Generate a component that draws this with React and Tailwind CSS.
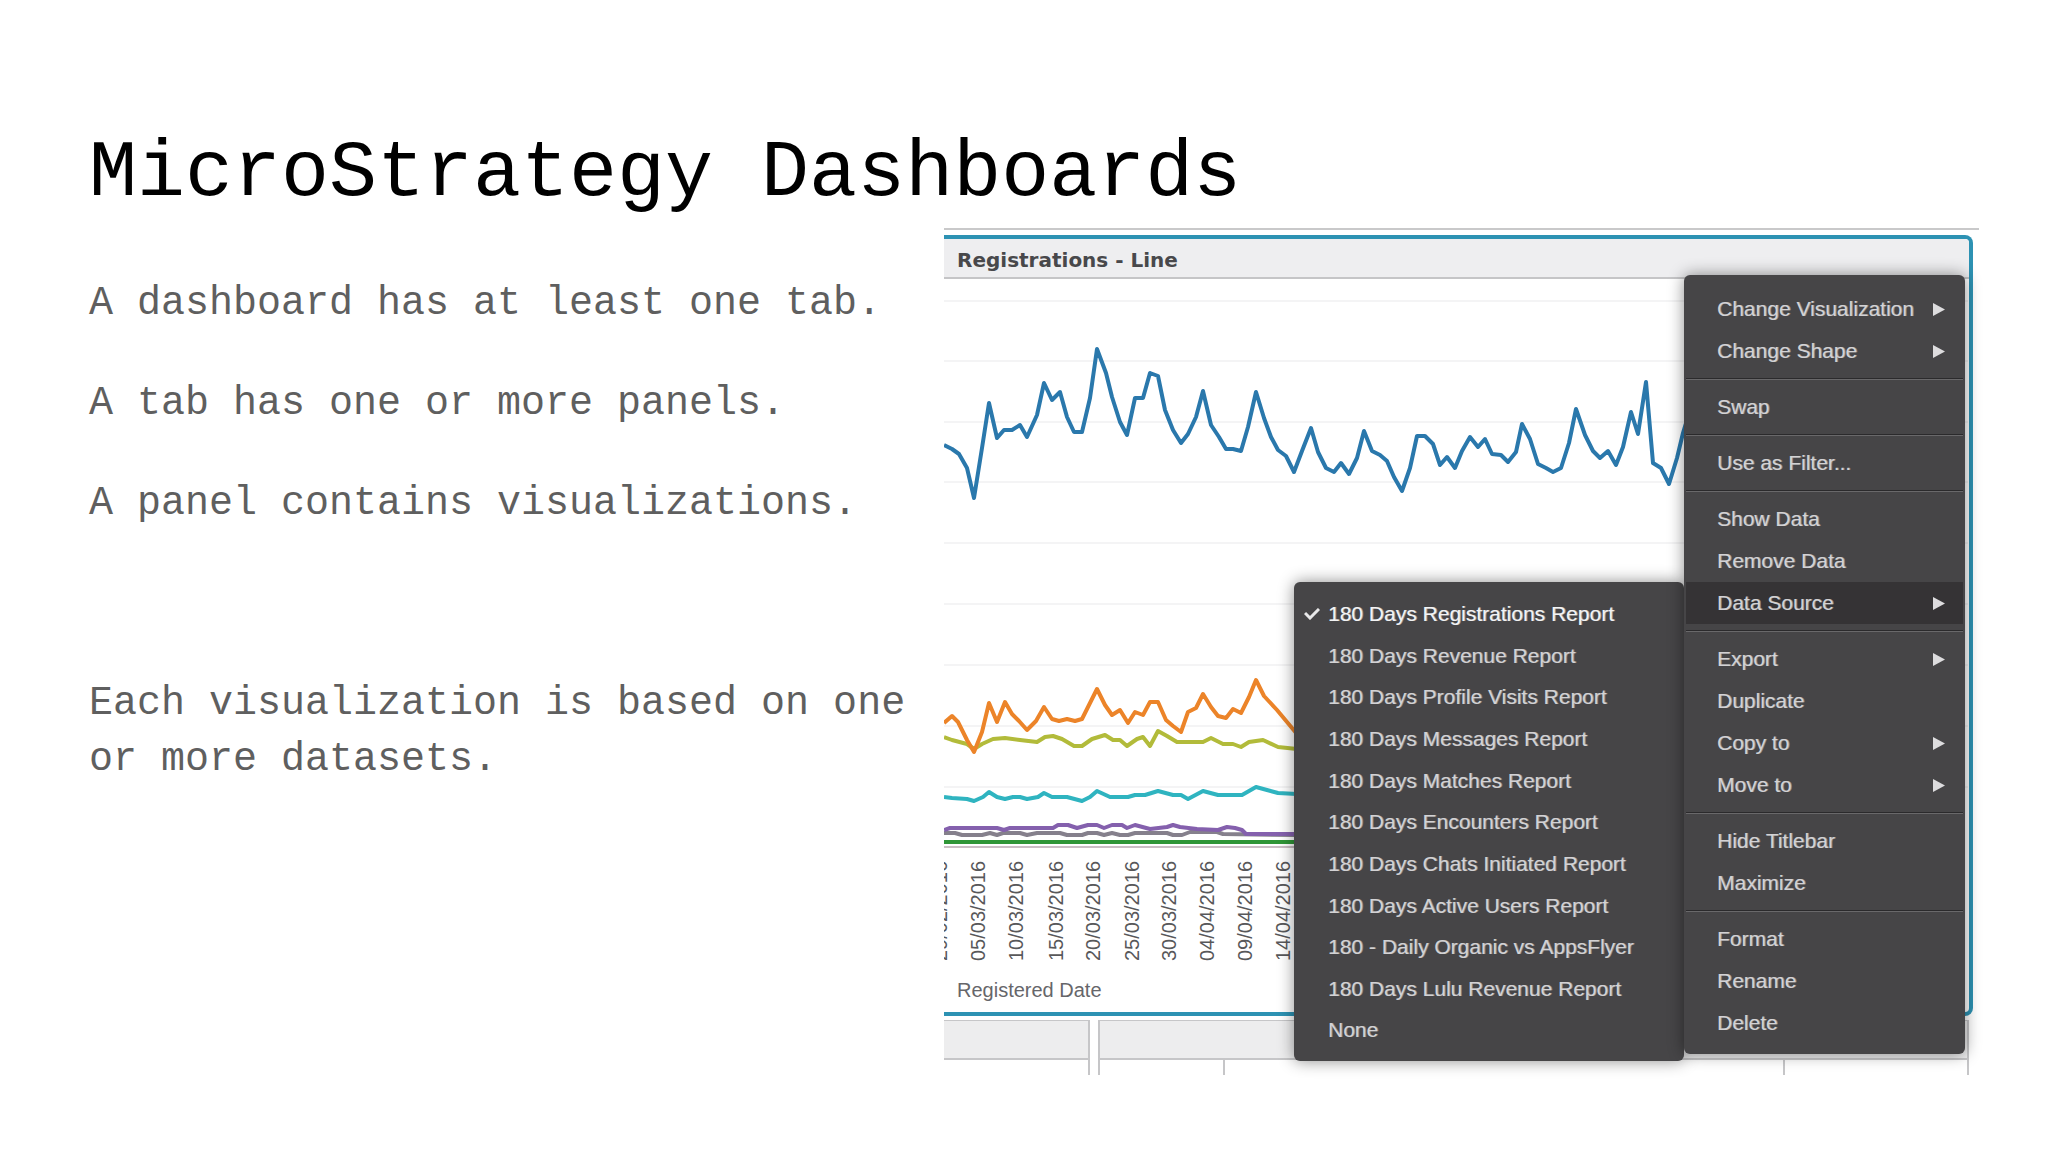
const blueLine =
  "944,445 952,449 959,454 967,468 974,498 982,448 989,403 997,438 1004,430 1012,430 1020,425 1027,437 1037,415 1044,383 1052,400 1060,392 1067,417 1074,432 1082,432 1090,398 1097,349 1106,373 1112,397 1120,422 1127,435 1135,398 1143,398 1150,373 1158,376 1165,410 1173,430 1181,443 1188,434 1196,417 1203,391 1211,425 1219,437 1226,449 1233,449 1241,451 1248,427 1256,392 1264,418 1271,437 1278,450 1286,456 1294,472 1302,451 1311,428 1318,452 1326,468 1334,472 1341,463 1349,474 1357,458 1364,431 1372,451 1380,455 1387,461 1394,477 1402,491 1410,468 1417,436 1425,436 1433,444 1440,465 1447,457 1455,468 1462,451 1470,437 1478,447 1485,439 1492,454 1501,455 1508,462 1516,452 1522,424 1530,439 1538,464 1546,468 1553,472 1561,468 1569,443 1576,409 1585,435 1593,451 1600,458 1608,451 1616,465 1623,447 1631,412 1638,434 1646,382 1653,463 1661,468 1669,484 1677,458 1683,433 1690,410";
const orangeLine =
  "944,723 952,716 958,722 967,740 974,752 982,732 989,703 997,722 1005,702 1012,714 1019,721 1027,730 1036,721 1044,707 1052,719 1059,721 1067,719 1075,721 1082,719 1090,703 1097,689 1105,705 1112,715 1120,710 1128,723 1135,712 1143,715 1150,702 1158,702 1166,720 1173,726 1181,732 1188,712 1196,708 1203,694 1211,707 1218,716 1226,718 1233,709 1241,713 1249,697 1256,680 1264,696 1277,710 1297,734";
const oliveLine =
  "944,737 952,740 967,744 974,749 982,744 993,739 1005,738 1020,740 1037,742 1045,737 1053,736 1062,739 1074,746 1082,746 1092,739 1105,735 1113,740 1120,740 1127,746 1137,739 1143,737 1150,746 1158,731 1167,736 1177,742 1203,742 1211,738 1223,744 1233,744 1241,747 1249,742 1263,740 1278,747 1297,749";
const cyanLine =
  "944,797 952,798 967,799 974,801 983,797 989,792 997,797 1005,799 1013,797 1020,797 1027,799 1038,797 1044,793 1052,797 1067,797 1082,801 1090,797 1097,791 1110,797 1128,797 1135,795 1145,795 1158,791 1173,795 1181,795 1188,799 1203,791 1218,795 1242,795 1256,787 1278,793 1297,794";
const purpleLine =
  "944,830 950,828 997,828 1004,830 1010,828 1053,828 1058,825 1068,825 1077,828 1088,825 1097,825 1104,828 1112,825 1122,825 1127,828 1135,825 1150,829 1167,827 1173,825 1180,827 1197,829 1218,830 1227,827 1235,828 1242,830 1246,834 1263,834 1297,834";
const grayLine =
  "944,833 955,833 962,835 982,835 990,833 997,835 1003,833 1020,833 1027,835 1037,833 1060,833 1067,835 1082,835 1088,833 1097,833 1104,835 1112,833 1120,835 1128,835 1135,833 1167,833 1173,835 1182,835 1190,832 1217,832 1223,834 1297,835";

const series = [
  { name: "gray", color: "#85808c", points: grayLine },
  { name: "purple", color: "#8460ad", points: purpleLine },
  { name: "cyan", color: "#2fb4c0", points: cyanLine },
  { name: "olive", color: "#b2bb3a", points: oliveLine },
  { name: "orange", color: "#ec8429", points: orangeLine },
  { name: "blue", color: "#2a78ac", points: blueLine },
];

const gridLines = [301, 361, 422, 482, 543, 604, 665, 726, 787];

const dates = [
  [940, "29/02/2016"],
  [978, "05/03/2016"],
  [1016, "10/03/2016"],
  [1056, "15/03/2016"],
  [1093, "20/03/2016"],
  [1132, "25/03/2016"],
  [1169, "30/03/2016"],
  [1207, "04/04/2016"],
  [1245, "09/04/2016"],
  [1283, "14/04/2016"],
];

const menuGroups = [
  [
    { label: "Change Visualization", sub: true },
    { label: "Change Shape", sub: true },
  ],
  [{ label: "Swap" }],
  [{ label: "Use as Filter..." }],
  [
    { label: "Show Data" },
    { label: "Remove Data" },
    { label: "Data Source", sub: true, active: true },
  ],
  [
    { label: "Export", sub: true },
    { label: "Duplicate" },
    { label: "Copy to", sub: true },
    { label: "Move to", sub: true },
  ],
  [{ label: "Hide Titlebar" }, { label: "Maximize" }],
  [{ label: "Format" }, { label: "Rename" }, { label: "Delete" }],
];

const sources = [
  "180 Days Registrations Report",
  "180 Days Revenue Report",
  "180 Days Profile Visits Report",
  "180 Days Messages Report",
  "180 Days Matches Report",
  "180 Days Encounters Report",
  "180 Days Chats Initiated Report",
  "180 Days Active Users Report",
  "180 - Daily Organic vs AppsFlyer",
  "180 Days Lulu Revenue Report",
  "None",
];

function LineChart() {
  return (
    <svg
      className="block h-[691px] w-[1024px] max-w-none"
      viewBox="944 279 1024 691"
      role="img"
      aria-label="Registrations by date"
    >
      {gridLines.map((y) => (
        <path key={y} d={`M944 ${y}H1968`} stroke="#f4f4f5" strokeWidth="2" />
      ))}
      <path d="M944 847H1960" stroke="#c9bfc4" strokeWidth="2" />
      {series.map((s) => (
        <polyline
          key={s.name}
          points={s.points}
          fill="none"
          stroke={s.color}
          strokeWidth="4"
          strokeLinejoin="round"
        />
      ))}
      <path d="M944 842H1960" stroke="#2f9637" strokeWidth="4" />
      {dates.map(([x, label]) => (
        <text
          key={label}
          transform={`translate(${x + 7} 961) rotate(-90)`}
          className="fill-[#58585a] font-['Liberation_Sans',sans-serif] text-[20px]"
        >
          {label}
        </text>
      ))}
    </svg>
  );
}

function Arrow() {
  return (
    <svg className="h-[13px] w-[12px]" viewBox="0 0 12 13" aria-hidden="true">
      <path d="M0 0L12 6.5L0 13Z" fill="#dddcde" />
    </svg>
  );
}

function SourceMenu() {
  return (
    <ul
      role="menu"
      aria-label="Data Source"
      className="flex h-[479px] w-[390px] flex-col rounded-md bg-[#464547] pt-[11px] pb-[10px] shadow-[0_0_16px_rgba(0,0,0,0.45)]"
    >
      {sources.map((label, i) => (
        <li key={label} role="none" className="flex flex-1">
          <button
            role="menuitemradio"
            aria-checked={i === 0}
            className={
              i === 0
                ? "flex w-full items-center pl-[10px] text-left text-[#f3f3f4] [text-shadow:1px_0_0_rgba(243,243,244,0.5)]"
                : "flex w-full items-center pl-[10px] text-left [text-shadow:1px_0_0_rgba(211,210,212,0.5)]"
            }
          >
            <span className="w-6 shrink-0">
              {i === 0 && (
                <svg className="h-3 w-4" viewBox="0 0 16 12" aria-hidden="true">
                  <path d="M1 5L6 10L15 1" fill="none" stroke="#e8e8e9" strokeWidth="3" />
                </svg>
              )}
            </span>
            {label}
          </button>
        </li>
      ))}
    </ul>
  );
}

function MainMenu() {
  return (
    <div
      role="menu"
      aria-label="Visualization"
      className="mb-[7px] w-[281px] rounded-md bg-[#464547] px-[2px] pt-[13px] pb-[10px] shadow-[0_0_16px_rgba(0,0,0,0.45)]"
    >
      {menuGroups.map((group, g) => (
        <div key={group[0].label} role="group">
          {g > 0 && (
            <div className="my-[6px] h-[2px] border-t border-b border-t-[#2b2a2c] border-b-[#69686a]" />
          )}
          {group.map((item) => (
            <button
              key={item.label}
              role="menuitem"
              className={
                item.active
                  ? "flex h-[42px] w-full items-center justify-between bg-[#353335] pr-[18px] pl-[31px] text-left [text-shadow:1px_0_0_rgba(211,210,212,0.5)]"
                  : "flex h-[42px] w-full items-center justify-between pr-[18px] pl-[31px] text-left [text-shadow:1px_0_0_rgba(211,210,212,0.5)]"
              }
            >
              {item.label}
              {item.sub && <Arrow />}
            </button>
          ))}
        </div>
      ))}
    </div>
  );
}

export default function App() {
  return (
    <main className="min-h-screen bg-white pt-[126px]">
      <h1 className="mb-[6px] pl-[89px] font-['Liberation_Mono',monospace] text-[80px] leading-[96px] whitespace-nowrap text-black">
        MicroStrategy Dashboards
      </h1>
      <div className="flex items-start">
        <div className="w-[944px] shrink-0 pt-12 pr-8 pl-[89px] font-['Liberation_Mono',monospace] text-[40px] leading-[56px] text-[#5f5f5f]">
          <p>A dashboard has at least one tab.</p>
          <p className="mt-11">A tab has one or more panels.</p>
          <p className="mt-11">A panel contains visualizations.</p>
          <p className="mt-36">Each visualization is based on one or more datasets.</p>
        </div>

        <section className="relative mr-[69px] min-w-0 flex-1 font-['Liberation_Sans',Arial,sans-serif]">
          <div className="h-[2px] bg-[#c9c9ca]" />
          <article className="mt-[5px] mr-[6px] overflow-hidden rounded-r-lg border-4 border-l-0 border-[#2d92b3]">
            <h2 className="h-10 border-b-2 border-[#c5c5c7] bg-[#eeeef0] pl-[13px] font-['DejaVu_Sans',Verdana,sans-serif] text-[20px] leading-[42px] font-bold text-[#48484b]">
              Registrations - Line
            </h2>
            <LineChart />
            <p className="h-[42px] pl-[13px] text-[20px] leading-[40px] text-[#66666a]">
              Registered Date
            </p>
          </article>
          <div className="mt-1 mr-[10px] flex h-[55px] gap-2">
            <div className="w-[146px] border-r-2 border-[#c6c6c8]">
              <div className="h-10 border-t border-b-2 border-[#c6c6c8] bg-[#ededee]" />
            </div>
            <div className="flex flex-1 flex-col border-x-2 border-[#c6c6c8]">
              <div className="h-10 border-t border-b-2 border-[#c6c6c8] bg-[#ededee]" />
              <div className="flex flex-1">
                <div className="w-[125px] border-r-2 border-[#c6c6c8]" />
                <div className="flex-1" />
                <div className="w-[184px] border-l-2 border-[#c6c6c8]" />
              </div>
            </div>
          </div>

          <div className="absolute top-[47px] right-[14px] flex items-end text-[21px] text-[#d3d2d4]">
            <SourceMenu />
            <MainMenu />
          </div>
        </section>
      </div>
    </main>
  );
}
